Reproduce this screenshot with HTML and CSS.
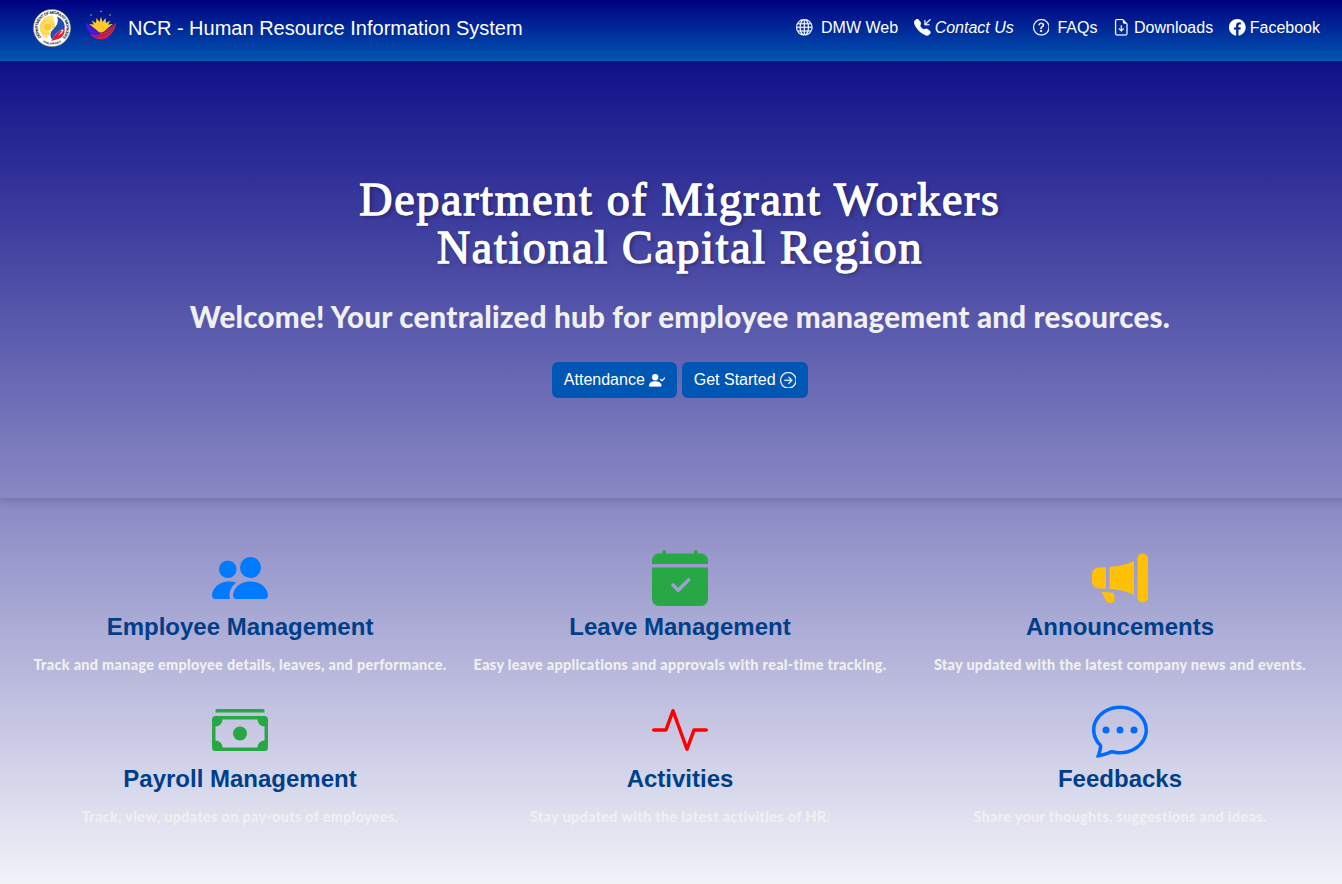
FILE: index.html
```html
<!DOCTYPE html>
<html lang="en">
<head>
<meta charset="utf-8">
<title>NCR - Human Resource Information System</title>
<link rel="stylesheet" href="styles.css">
</head>
<body>
<header class="navbar">
  <div class="brand">
    <svg class="seal" viewBox="0 0 38 38">
      <defs>
        <path id="ring" d="M19 33.2a14.2 14.2 0 1 1 .1 0"/>
        <path id="ring-low" d="M7 30.8A17 17 0 0 0 31 30.8"/>
      </defs>
      <circle cx="19" cy="19" r="18.6" fill="#fff" stroke="#8a8a80" stroke-width=".6"/>
      <text class="ring-text" textLength="65"><textPath href="#ring" startOffset="12" textLength="65">DEPARTMENT OF MIGRANT WORKERS</textPath></text>
      <text class="ring-text small"><textPath href="#ring-low" startOffset="4">PHILIPPINES</textPath></text>
      <circle cx="19" cy="19" r="13.4" fill="#fff"/>
      <path d="M20 6.500A12.500 12.500 0 0 0 11 28.500l3 1.500 2-8 6-6z" fill="#ffe27a"/>
      <circle cx="14.500" cy="18" r="6.300" fill="none" stroke="#fbd34a" stroke-width="3" stroke-dasharray="1.600 .9"/>
      <circle cx="14.500" cy="18" r="3.600" fill="#f9ca35"/>
      <path d="M24 7.500c7 3 9 9 7 14-1-2-3-1-5 1l-4 3-3 5c-3-5-1-8 2-11s5-7 3-12z" fill="#1c4db8"/>
      <path d="M31.500 19c1 6-3 11-8 11.500L18 32c2-2 2-5 5-7l5-4 1 1-4 5 4-3z" fill="#d91e3a"/>
    </svg>
    <svg class="emblem" viewBox="0 0 40 38">
      <path d="M13 19l-5-4 5 .5-2.500-4 4.500 2.500.5-5 3 4 1.500-5.500 1.500 5.500 3-4 .5 5 4.500-2.500-2.500 4 5-.5-5 4-7 6z" fill="#ffc928"/>
      <g fill="#e0b040"><circle cx="10" cy="6" r=".8"/><circle cx="20" cy="2.500" r=".8"/><circle cx="29" cy="6" r=".8"/></g>
      <path d="M5 13c3 4 8 6 14 11l10 5c-9 4-18 2-20-5C6 21 5 17 5 13z" fill="#4a16dd"/>
      <path d="M35 13c0 4-1 8-4 11-6 8-16 8-22 1 7 2 12 1 16-4 4-2 8-4 10-8z" fill="#d2233f"/>
      <path d="M12 27c8 1 16-1 22-8M16 24c7 0 13-2 19-8" fill="none" stroke="#841a65" stroke-width=".8"/>
      <text class="emblem-text" x="2" y="35" textLength="36">BAGONG PILIPINAS</text>
    </svg>
    <span class="brand-name">NCR - Human Resource Information System</span>
  </div>
  <nav class="links">
    <a class="link web"><svg class="icon" viewBox="0 0 16 16"><path d="M0 8a8 8 0 1 1 16 0A8 8 0 0 1 0 8m7.5-6.923c-.67.204-1.335.82-1.887 1.855A8 8 0 0 0 5.145 4H7.5zM4.09 4a9.3 9.3 0 0 1 .64-1.539 7 7 0 0 1 .597-.933A7.03 7.03 0 0 0 2.255 4zm-.582 3.5c.03-.877.138-1.718.312-2.5H1.674a7 7 0 0 0-.656 2.5zM4.847 5a12.5 12.5 0 0 0-.338 2.5H7.5V5zM8.5 5v2.5h2.99a12.5 12.5 0 0 0-.337-2.5zM4.51 8.5a12.5 12.5 0 0 0 .337 2.5H7.5V8.5zm3.99 0V11h2.653c.187-.765.306-1.608.338-2.5zM5.145 12q.208.58.468 1.068c.552 1.035 1.218 1.65 1.887 1.855V12zm.182 2.472a7 7 0 0 1-.597-.933A9.3 9.3 0 0 1 4.09 12H2.255a7 7 0 0 0 3.072 2.472M3.82 11a13.7 13.7 0 0 1-.312-2.5h-2.49c.062.89.291 1.733.656 2.5zm6.853 3.472A7 7 0 0 0 13.745 12H11.91a9.3 9.3 0 0 1-.64 1.539 7 7 0 0 1-.597.933M8.5 12v2.923c.67-.204 1.335-.82 1.887-1.855q.26-.487.468-1.068zm3.68-1h2.146c.365-.767.594-1.61.656-2.5h-2.49a13.7 13.7 0 0 1-.312 2.5m2.802-3.5a7 7 0 0 0-.656-2.5H12.18c.174.782.282 1.623.312 2.5zM11.27 2.461c.247.464.462.98.64 1.539h1.835a7 7 0 0 0-3.072-2.472c.218.284.418.598.597.933M10.855 4a8 8 0 0 0-.468-1.068C9.835 1.897 9.17 1.282 8.5 1.077V4z"/></svg><span>DMW Web</span></a>
    <a class="link contact"><svg class="icon" viewBox="0 0 16 16"><path fill-rule="evenodd" d="M1.885.511a1.745 1.745 0 0 1 2.61.163L6.29 2.98c.329.423.445.974.315 1.494l-.547 2.19a.68.68 0 0 0 .178.643l2.457 2.457a.68.68 0 0 0 .644.178l2.189-.547a1.75 1.75 0 0 1 1.494.315l2.306 1.794c.829.645.905 1.87.163 2.611l-1.034 1.034c-.74.74-1.846 1.065-2.877.702a18.6 18.6 0 0 1-7.01-4.42 18.6 18.6 0 0 1-4.42-7.009c-.362-1.03-.037-2.137.703-2.877z"/><path d="M15.854.146a.5.5 0 0 1 0 .708L11.707 5H14.5a.5.5 0 0 1 0 1h-4a.5.5 0 0 1-.5-.5v-4a.5.5 0 0 1 1 0v2.793L15.146.146a.5.5 0 0 1 .708 0"/></svg><span>Contact Us</span></a>
    <a class="link faq"><svg class="icon" viewBox="0 0 16 16"><path d="M8 15A7 7 0 1 1 8 1a7 7 0 0 1 0 14m0 1A8 8 0 1 0 8 0a8 8 0 0 0 0 16"/><path d="M5.255 5.786a.237.237 0 0 0 .241.247h.825c.138 0 .248-.113.266-.25.09-.656.54-1.134 1.342-1.134.686 0 1.314.343 1.314 1.168 0 .635-.374.927-.965 1.371-.673.489-1.206 1.06-1.168 1.987l.003.217a.25.25 0 0 0 .25.246h.811a.25.25 0 0 0 .25-.25v-.105c0-.718.273-.927 1.01-1.486.609-.463 1.244-.977 1.244-2.056 0-1.511-1.276-2.241-2.673-2.241-1.267 0-2.655.59-2.75 2.286m1.557 5.763c0 .533.425.927 1.01.927.609 0 1.028-.394 1.028-.927 0-.552-.42-.94-1.029-.94-.584 0-1.009.388-1.009.94"/></svg><span>FAQs</span></a>
    <a class="link"><svg class="icon" viewBox="0 0 16 16"><path d="M8.5 6.5a.5.5 0 0 0-1 0v3.793L6.354 9.146a.5.5 0 1 0-.708.708l2 2a.5.5 0 0 0 .708 0l2-2a.5.5 0 0 0-.708-.708L8.5 10.293z"/><path d="M14 14V4.5L9.5 0H4a2 2 0 0 0-2 2v12a2 2 0 0 0 2 2h8a2 2 0 0 0 2-2M9.5 3A1.5 1.5 0 0 0 11 4.5h2V14a1 1 0 0 1-1 1H4a1 1 0 0 1-1-1V2a1 1 0 0 1 1-1h5.5z"/></svg><span>Downloads</span></a>
    <a class="link"><svg class="icon" viewBox="0 0 16 16"><path d="M16 8.049c0-4.446-3.582-8.05-8-8.05C3.58 0-.002 3.603-.002 8.05c0 4.017 2.926 7.347 6.75 7.951v-5.625h-2.03V8.05H6.75V6.275c0-2.017 1.195-3.131 3.022-3.131.876 0 1.791.157 1.791.157v1.98h-1.009c-.993 0-1.303.621-1.303 1.258v1.51h2.218l-.354 2.326H9.25V16c3.824-.604 6.75-3.934 6.75-7.951"/></svg><span>Facebook</span></a>
  </nav>
</header>
<main class="page">
  <section class="hero">
    <h1 class="hero-title">Department of Migrant Workers<br>National Capital Region</h1>
    <p class="welcome">Welcome! Your centralized hub for employee management and resources.</p>
    <div class="actions">
      <button class="btn"><span>Attendance</span><svg class="icon" viewBox="0 0 16 16"><path fill-rule="evenodd" d="M15.854 5.146a.5.5 0 0 1 0 .708l-3 3a.5.5 0 0 1-.708 0l-1.5-1.5a.5.5 0 0 1 .708-.708L12.5 7.793l2.646-2.647a.5.5 0 0 1 .708 0"/><path d="M1 14s-1 0-1-1 1-4 6-4 6 3 6 4-1 1-1 1zm5-6a3 3 0 1 0 0-6 3 3 0 0 0 0 6"/></svg></button>
      <button class="btn"><span>Get Started</span><svg class="icon" viewBox="0 0 16 16"><path fill-rule="evenodd" d="M1 8a7 7 0 1 0 14 0A7 7 0 0 0 1 8m15 0A8 8 0 1 1 0 8a8 8 0 0 1 16 0M4.5 7.5a.5.5 0 0 0 0 1h5.793l-2.147 2.146a.5.5 0 0 0 .708.708l3-3a.5.5 0 0 0 0-.708l-3-3a.5.5 0 1 0-.708.708L10.293 7.5z"/></svg></button>
    </div>
  </section>
  <section class="features">
    <article class="feature">
      <svg class="feature-icon blue" viewBox="0 0 16 16"><path d="M7 14s-1 0-1-1 1-4 5-4 5 3 5 4-1 1-1 1zm4-6a3 3 0 1 0 0-6 3 3 0 0 0 0 6m-5.784 6A2.24 2.24 0 0 1 5 13c0-1.355.68-2.75 1.936-3.72A6.3 6.3 0 0 0 5 9c-4 0-5 3-5 4s1 1 1 1zM4.5 8a2.5 2.5 0 1 0 0-5 2.5 2.5 0 0 0 0 5"/></svg>
      <h2 class="feature-title">Employee Management</h2>
      <p class="feature-text">Track and manage employee details, leaves, and performance.</p>
    </article>
    <article class="feature">
      <svg class="feature-icon green" viewBox="0 0 16 16"><path d="M4 .5a.5.5 0 0 0-1 0V1H2a2 2 0 0 0-2 2v1h16V3a2 2 0 0 0-2-2h-1V.5a.5.5 0 0 0-1 0V1H4zM16 14V5H0v9a2 2 0 0 0 2 2h12a2 2 0 0 0 2-2m-5.146-5.146-3 3a.5.5 0 0 1-.708 0l-1.5-1.5a.5.5 0 0 1 .708-.708L7.5 10.793l2.646-2.647a.5.5 0 0 1 .708.708"/></svg>
      <h2 class="feature-title">Leave Management</h2>
      <p class="feature-text">Easy leave applications and approvals with real-time tracking.</p>
    </article>
    <article class="feature">
      <svg class="feature-icon yellow" viewBox="0 0 16 16"><path d="M13 2.5a1.5 1.5 0 0 1 3 0v11a1.5 1.5 0 0 1-3 0zm-1 .724c-2.067.95-4.539 1.481-7 1.656v6.237a25 25 0 0 1 1.088.085c2.053.204 4.038.668 5.912 1.56zm-8 7.841V4.934c-.68.027-1.399.043-2.008.053A2.02 2.02 0 0 0 0 7v2c0 1.106.896 1.996 1.994 2.009l.496.008a64 64 0 0 1 1.51.048m1.39 1.081q.428.032.85.078l.253 1.69a1 1 0 0 1-.983 1.187h-.548a1 1 0 0 1-.916-.599l-1.314-2.48a66 66 0 0 1 1.692.064q.491.026.966.06"/></svg>
      <h2 class="feature-title">Announcements</h2>
      <p class="feature-text">Stay updated with the latest company news and events.</p>
    </article>
    <article class="feature">
      <svg class="feature-icon green" viewBox="0 0 16 16"><path fill-rule="evenodd" d="M1.5 2h13a.5.5 0 0 1 .5.5V3H1v-.5a.5.5 0 0 1 .5-.5M0 5a1 1 0 0 1 1-1h14a1 1 0 0 1 1 1v8a1 1 0 0 1-1 1H1a1 1 0 0 1-1-1zm3 0a2 2 0 0 1-2 2v4a2 2 0 0 1 2 2h10a2 2 0 0 1 2-2V7a2 2 0 0 1-2-2z"/><circle cx="8" cy="9" r="2"/></svg>
      <h2 class="feature-title">Payroll Management</h2>
      <p class="feature-text">Track, view, updates on pay-outs of employees.</p>
    </article>
    <article class="feature">
      <svg class="feature-icon red" viewBox="0 0 16 16"><path fill-rule="evenodd" d="M6 2a.5.5 0 0 1 .47.33L10 12.036l1.53-4.208A.5.5 0 0 1 12 7.5h3.5a.5.5 0 0 1 0 1h-3.15l-1.88 5.17a.5.5 0 0 1-.94 0L6 3.964 4.47 8.171A.5.5 0 0 1 4 8.5H.5a.5.5 0 0 1 0-1h3.15l1.88-5.17A.5.5 0 0 1 6 2"/></svg>
      <h2 class="feature-title">Activities</h2>
      <p class="feature-text">Stay updated with the latest activities of HR.</p>
    </article>
    <article class="feature">
      <svg class="feature-icon chat" viewBox="0 0 16 16"><path d="M5 8a1 1 0 1 1-2 0 1 1 0 0 1 2 0m4 0a1 1 0 1 1-2 0 1 1 0 0 1 2 0m3 1a1 1 0 1 0 0-2 1 1 0 0 0 0 2"/><path d="m2.165 15.803.02-.004c1.83-.363 2.948-.842 3.468-1.105A9 9 0 0 0 8 15c4.418 0 8-3.134 8-7s-3.582-7-8-7-8 3.134-8 7c0 1.76.743 3.37 1.97 4.6a10.4 10.4 0 0 1-.524 2.318l-.003.011a11 11 0 0 1-.244.637c-.079.186.074.394.273.362a22 22 0 0 0 .693-.125m.8-3.108a1 1 0 0 0-.287-.801C1.618 10.83 1 9.468 1 8c0-3.192 3.004-6 7-6s7 2.808 7 6-3.004 6-7 6a8 8 0 0 1-2.088-.272 1 1 0 0 0-.711.074c-.387.196-1.24.57-2.634.893a11 11 0 0 0 .398-2"/></svg>
      <h2 class="feature-title">Feedbacks</h2>
      <p class="feature-text">Share your thoughts, suggestions and ideas.</p>
    </article>
  </section>
</main>
</body>
</html>
```
FILE: styles.css
```css
* { box-sizing: border-box; }
body {
  margin: 0;
  height: 884px;
  overflow: hidden;
  font: 16px/24px "Liberation Sans", Arial, sans-serif;
  background: linear-gradient(#000080, #f2f2f9);
}
svg { fill: currentColor; }
.navbar {
  display: flex;
  align-items: center;
  justify-content: space-between;
  height: 61px;
  padding: 0 22px 6px 33px;
  color: #fff;
  background: linear-gradient(#000080, #0056b3);
  box-shadow: 0 4px 8px rgba(0, 0, 0, .1);
}
.brand, .links, .link { display: flex; align-items: center; }
.brand { font-size: 20px; white-space: nowrap; }
.seal { width: 38px; height: 38px; margin-right: 10px; }
.emblem { width: 40px; height: 38px; margin-right: 7px; }
.ring-text { font-size: 4px; font-weight: 700; fill: #111; }
.small { font-size: 3px; }
.emblem-text { font-size: 3.6px; fill: #47227f; }
.links { gap: 16px; }
.link { gap: 4px; white-space: nowrap; }
.icon { width: 16.6px; height: 16.6px; flex: none; stroke: currentColor; stroke-width: .2; }
.link.web { gap: 8px; }
.contact { font-style: italic; margin-right: 3px; }
.link.faq { gap: 8px; }
.page { width: 1360px; }
.hero {
  height: 437px;
  padding-top: 115px;
  text-align: center;
  box-shadow: 0 4px 8px 8px rgba(0, 0, 0, .1);
  clip-path: inset(0 0 -12px 0);
  box-shadow: 0 4px 8px rgba(0, 0, 0, .14);
}
.hero-title {
  margin: 0;
  font: 400 46px/48px "Liberation Serif", serif;
  letter-spacing: 1.7px;
  color: #fff;
  -webkit-text-stroke: 1.3px #fff;
  text-shadow: 2px 2px 4px rgba(0, 0, 0, .4);
  white-space: nowrap;
}
.welcome {
  margin: 27px 0 0;
  font: 900 29.5px/36px Lato, sans-serif;
  letter-spacing: .25px;
  color: #f0f0f0;
  white-space: nowrap;
}
.actions { display: flex; justify-content: center; gap: 5px; margin-top: 27px; }
.btn {
  display: flex;
  align-items: center;
  gap: 4px;
  height: 36px;
  padding: 0 11.7px;
  border: 0;
  border-radius: 6px;
  font: 16px/24px "Liberation Sans", Arial, sans-serif;
  color: #fff;
  background: #0056b3;
}
.features {
  display: grid;
  grid-template-columns: repeat(3, 440px);
  grid-auto-rows: 152px;
  padding: 52px 20px 0;
}
.feature { text-align: center; }
.feature-icon { display: block; width: 56px; height: 56px; margin: 0 auto; }
.blue { color: #007bff; }
.green { color: #28a745; }
.yellow { color: #ffc107; }
.red { color: #f00; }
.chat { color: #006aff; }
.feature-title { margin: 6px 0 0; font-size: 24px; line-height: 29px; color: #003f88; }
.feature-text {
  margin: 12px 0 0;
  font: 900 14.4px/24px Lato, sans-serif;
  letter-spacing: .32px;
  color: #f0f0f0;
  white-space: nowrap;
}
```
